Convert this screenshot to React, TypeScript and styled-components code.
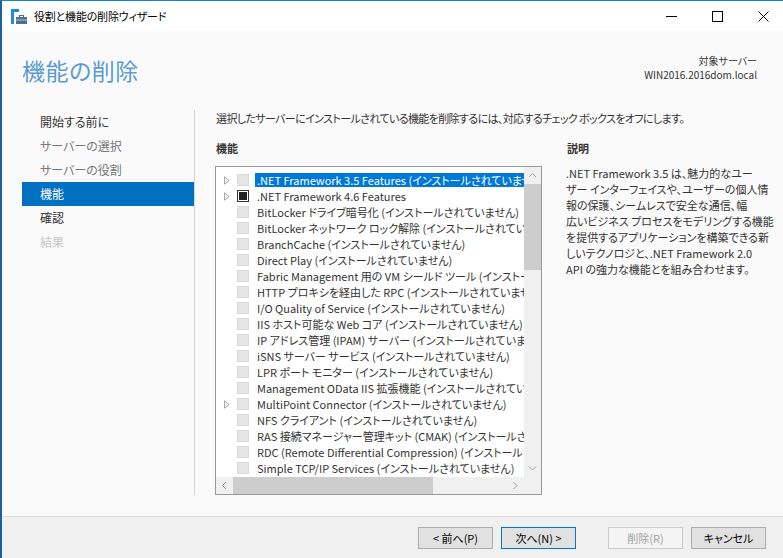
import React from "react"
import styled, { createGlobalStyle } from "styled-components"

const GlobalStyle = createGlobalStyle`
  html, body {
    margin: 0;
    padding: 0;
    background: #ffffff;
  }
  body {
    font-family: "Noto Sans CJK JP", "Noto Sans", sans-serif;
    font-feature-settings: "palt";
    font-size: 11px;
    color: #000;
  }
`

const Window = styled.div`
  width: 783px;
  height: 558px;
  box-sizing: border-box;
  border-top: 1px solid #1883d7;
  border-left: 2px solid #1f5f9e;
  display: flex;
  flex-direction: column;
  overflow: hidden;
  background: #fafafa;
`

const TitleBar = styled.div`
  height: 30px;
  flex-shrink: 0;
  display: flex;
  align-items: center;
  background: #ffffff;
  padding-left: 8px;
`

const TitleText = styled.span`
  margin-left: 6px;
  font-size: 11px;
  letter-spacing: -0.2px;
  color: #000;
`

const Controls = styled.div`
  margin-left: auto;
  margin-right: -3px;
  display: flex;
  height: 30px;
`

const ControlButton = styled.div`
  width: 46px;
  height: 30px;
  display: flex;
  align-items: center;
  justify-content: center;
`

const Main = styled.div`
  flex: 1;
  display: flex;
  flex-direction: column;
  background: #fafafa;
  min-height: 0;
`

const Header = styled.div`
  height: 79px;
  flex-shrink: 0;
  display: flex;
  justify-content: space-between;
  align-items: flex-start;
  padding: 0 26px 0 20px;
`

const PageTitle = styled.h1`
  margin: 24px 0 0;
  font-size: 23px;
  line-height: 30px;
  font-weight: 400;
  color: #5a9bd3;
  letter-spacing: 0.5px;
`

const Target = styled.div`
  margin-top: 23px;
  text-align: right;
  font-size: 10px;
  line-height: 14px;
  color: #333;
`

const Body = styled.div`
  flex: 1;
  display: flex;
  padding-bottom: 21px;
  min-height: 0;
`

const Nav = styled.nav`
  width: 172px;
  margin-left: 20px;
  border-right: 1px solid #d5d5d5;
  flex-shrink: 0;
`

const NavItem = styled.div<{ $state: "done" | "muted" | "active" | "next" | "disabled" }>`
  height: 24px;
  line-height: 24px;
  padding-left: 18px;
  font-size: 12px;
  color: ${(p) =>
    p.$state === "active"
      ? "#ffffff"
      : p.$state === "muted"
      ? "#777777"
      : p.$state === "disabled"
      ? "#c6c6c6"
      : "#333333"};
  background: ${(p) => (p.$state === "active" ? "#0070c0" : "transparent")};
`

const Content = styled.div`
  flex: 1;
  display: flex;
  flex-direction: column;
  padding-left: 20px;
  min-width: 0;
`

const Instruction = styled.div`
  height: 16px;
  line-height: 16px;
  padding-left: 1px;
  letter-spacing: -0.62px;
  color: #333;
  white-space: nowrap;
`

const Columns = styled.div`
  flex: 1;
  display: grid;
  grid-template-columns: 327px 1fr;
  column-gap: 24px;
  margin-top: 14px;
  min-height: 0;
`

const Column = styled.div`
  display: flex;
  flex-direction: column;
  min-height: 0;
`

const SectionHeading = styled.div`
  height: 16px;
  line-height: 16px;
  padding-left: 1px;
  font-weight: 700;
  color: #333;
`

const ListBox = styled.div`
  margin-top: 10px;
  flex: 1;
  border: 1px solid #999999;
  background: #ffffff;
  display: grid;
  grid-template-columns: 1fr 17px;
  grid-template-rows: 1fr 17px;
  min-height: 0;
`

const Viewport = styled.div`
  overflow: hidden;
  padding-top: 5px;
  min-width: 0;
`

const Row = styled.div`
  height: 16px;
  display: flex;
  align-items: center;
  padding-left: 8px;
  white-space: nowrap;
`

const Expander = styled.div`
  width: 13px;
  flex-shrink: 0;
  display: flex;
  align-items: center;
`

const Check = styled.div<{ $checked?: boolean }>`
  width: 12px;
  height: 12px;
  flex-shrink: 0;
  box-sizing: border-box;
  border: 1px solid ${(p) => (p.$checked ? "#333333" : "#d9d9d9")};
  background: ${(p) => (p.$checked ? "#ffffff" : "#e6e6e6")};
  display: flex;
  align-items: center;
  justify-content: center;
`

const CheckMark = styled.div`
  width: 8px;
  height: 8px;
  background: #222222;
`

const Label = styled.span<{ $selected?: boolean }>`
  margin-left: 6px;
  padding: 0 2px;
  line-height: 14px;
  color: ${(p) => (p.$selected ? "#ffffff" : "#333333")};
  background: ${(p) => (p.$selected ? "#0078d7" : "transparent")};
`

const VScroll = styled.div`
  background: #f0f0f0;
  display: flex;
  flex-direction: column;
`

const HScroll = styled.div`
  background: #f0f0f0;
  display: flex;
  align-items: center;
`

const ScrollArrow = styled.div`
  width: 17px;
  height: 17px;
  flex-shrink: 0;
  display: flex;
  align-items: center;
  justify-content: center;
`

const VThumb = styled.div`
  height: 86px;
  background: #cdcdcd;
`

const HThumb = styled.div`
  width: 200px;
  height: 17px;
  background: #cdcdcd;
`

const Spacer = styled.div`
  flex: 1;
`

const Corner = styled.div`
  background: #f0f0f0;
`

const Description = styled.div`
  margin-top: 9px;
  line-height: 16px;
  color: #333;
  white-space: nowrap;
`

const Footer = styled.div`
  height: 42px;
  flex-shrink: 0;
  box-sizing: border-box;
  border-top: 1px solid #dcdcdc;
  background: #f0f0f0;
  display: flex;
  justify-content: flex-end;
  align-items: flex-start;
  padding: 10px 17px 0 0;
  gap: 8px;
`

const Button = styled.button<{ $variant?: "default" | "disabled"; $spaced?: boolean }>`
  width: 75px;
  height: 22px;
  padding: 0;
  font-family: inherit;
  font-size: 11px;
  font-feature-settings: "palt";
  background: ${(p) => (p.$variant === "disabled" ? "#f4f4f4" : "#e1e1e1")};
  color: ${(p) => (p.$variant === "disabled" ? "#a3a3a3" : "#000000")};
  border: 1px solid
    ${(p) => (p.$variant === "default" ? "#0078d7" : p.$variant === "disabled" ? "#cccccc" : "#adadad")};
  margin-right: ${(p) => (p.$spaced ? "24px" : "0")};
`

const AppIcon = () => (
  <svg width="18" height="17" viewBox="0 0 18 17">
    <rect x="1" y="1" width="8" height="3" fill="#1e88e5" />
    <rect x="1" y="1" width="3" height="15" fill="#1e88e5" />
    <rect x="6" y="9" width="11" height="7" fill="#4d6f90" />
    <path d="M9.5 9V7.5h4V9" fill="none" stroke="#4d6f90" strokeWidth="1.2" />
    <rect x="6" y="11.5" width="11" height="1" fill="#ffffff" opacity="0.6" />
  </svg>
)

const Triangle = () => (
  <svg width="6" height="9" viewBox="0 0 6 9">
    <path d="M0.5 0.8 L5 4.5 L0.5 8.2 Z" fill="none" stroke="#a6a6a6" strokeWidth="1" />
  </svg>
)

const Chevron = ({ dir }: { dir: "up" | "down" | "left" | "right" }) => {
  const d =
    dir === "up"
      ? "M1 5 L4.5 1.5 L8 5"
      : dir === "down"
      ? "M1 1.5 L4.5 5 L8 1.5"
      : dir === "left"
      ? "M5 1 L1.5 4.5 L5 8"
      : "M1.5 1 L5 4.5 L1.5 8"
  const vertical = dir === "up" || dir === "down"
  return (
    <svg width={vertical ? 9 : 7} height={vertical ? 7 : 9} viewBox={vertical ? "0 0 9 7" : "0 0 7 9"}>
      <path d={d} fill="none" stroke="#a0a0a0" strokeWidth="1" />
    </svg>
  )
}

const features = [
  { label: ".NET Framework 3.5 Features (インストールされていません)", expandable: true, selected: true },
  { label: ".NET Framework 4.6 Features", expandable: true, checked: true },
  { label: "BitLocker ドライブ暗号化 (インストールされていません)" },
  { label: "BitLocker ネットワーク ロック解除 (インストールされていません)" },
  { label: "BranchCache (インストールされていません)" },
  { label: "Direct Play (インストールされていません)" },
  { label: "Fabric Management 用の VM シールド ツール (インストールされていません)" },
  { label: "HTTP プロキシを経由した RPC (インストールされていません)" },
  { label: "I/O Quality of Service (インストールされていません)" },
  { label: "IIS ホスト可能な Web コア (インストールされていません)" },
  { label: "IP アドレス管理 (IPAM) サーバー (インストールされていません)" },
  { label: "iSNS サーバー サービス (インストールされていません)" },
  { label: "LPR ポート モニター (インストールされていません)" },
  { label: "Management OData IIS 拡張機能 (インストールされていません)" },
  { label: "MultiPoint Connector (インストールされていません)", expandable: true },
  { label: "NFS クライアント (インストールされていません)" },
  { label: "RAS 接続マネージャー管理キット (CMAK) (インストールされていません)" },
  { label: "RDC (Remote Differential Compression) (インストールされていません)" },
  { label: "Simple TCP/IP Services (インストールされていません)" },
  { label: "SMTP サーバー (インストールされていません)" },
]

const steps: { label: string; state: "done" | "muted" | "active" | "next" | "disabled" }[] = [
  { label: "開始する前に", state: "done" },
  { label: "サーバーの選択", state: "muted" },
  { label: "サーバーの役割", state: "muted" },
  { label: "機能", state: "active" },
  { label: "確認", state: "next" },
  { label: "結果", state: "disabled" },
]

const descriptionLines = [
  ".NET Framework 3.5 は、魅力的なユー",
  "ザー インターフェイスや、ユーザーの個人情",
  "報の保護、シームレスで安全な通信、幅",
  "広いビジネス プロセスをモデリングする機能",
  "を提供するアプリケーションを構築できる新",
  "しいテクノロジと、.NET Framework 2.0",
  "API の強力な機能とを組み合わせます。",
]

export default function App() {
  return (
    <Window>
      <GlobalStyle />
      <TitleBar>
        <AppIcon />
        <TitleText>役割と機能の削除ウィザード</TitleText>
        <Controls>
          <ControlButton>
            <svg width="11" height="11" viewBox="0 0 11 11">
              <path d="M0 5.5 H11" stroke="#000" strokeWidth="1" />
            </svg>
          </ControlButton>
          <ControlButton>
            <svg width="11" height="11" viewBox="0 0 11 11">
              <rect x="0.5" y="0.5" width="10" height="10" fill="none" stroke="#000" strokeWidth="1" />
            </svg>
          </ControlButton>
          <ControlButton>
            <svg width="11" height="11" viewBox="0 0 11 11">
              <path d="M0.5 0.5 L10.5 10.5 M10.5 0.5 L0.5 10.5" stroke="#000" strokeWidth="1" />
            </svg>
          </ControlButton>
        </Controls>
      </TitleBar>

      <Main>
        <Header>
          <PageTitle>機能の削除</PageTitle>
          <Target>
            <div>対象サーバー</div>
            <div>WIN2016.2016dom.local</div>
          </Target>
        </Header>

        <Body>
          <Nav>
            {steps.map((s) => (
              <NavItem key={s.label} $state={s.state}>
                {s.label}
              </NavItem>
            ))}
          </Nav>

          <Content>
            <Instruction>
              選択したサーバーにインストールされている機能を削除するには、対応するチェック ボックスをオフにします。
            </Instruction>
            <Columns>
              <Column>
                <SectionHeading>機能</SectionHeading>
                <ListBox>
                  <Viewport>
                    {features.map((f) => (
                      <Row key={f.label}>
                        <Expander>{f.expandable && <Triangle />}</Expander>
                        <Check $checked={f.checked}>{f.checked && <CheckMark />}</Check>
                        <Label $selected={f.selected}>{f.label}</Label>
                      </Row>
                    ))}
                  </Viewport>
                  <VScroll>
                    <ScrollArrow>
                      <Chevron dir="up" />
                    </ScrollArrow>
                    <VThumb />
                    <Spacer />
                    <ScrollArrow>
                      <Chevron dir="down" />
                    </ScrollArrow>
                  </VScroll>
                  <HScroll>
                    <ScrollArrow>
                      <Chevron dir="left" />
                    </ScrollArrow>
                    <HThumb />
                    <Spacer />
                    <ScrollArrow>
                      <Chevron dir="right" />
                    </ScrollArrow>
                  </HScroll>
                  <Corner />
                </ListBox>
              </Column>
              <Column>
                <SectionHeading>説明</SectionHeading>
                <Description>
                  {descriptionLines.map((l) => (
                    <div key={l}>{l}</div>
                  ))}
                </Description>
              </Column>
            </Columns>
          </Content>
        </Body>
      </Main>

      <Footer>
        <Button>&lt; 前へ(P)</Button>
        <Button $variant="default" $spaced>
          次へ(N) &gt;
        </Button>
        <Button $variant="disabled">削除(R)</Button>
        <Button>キャンセル</Button>
      </Footer>
    </Window>
  )
}
